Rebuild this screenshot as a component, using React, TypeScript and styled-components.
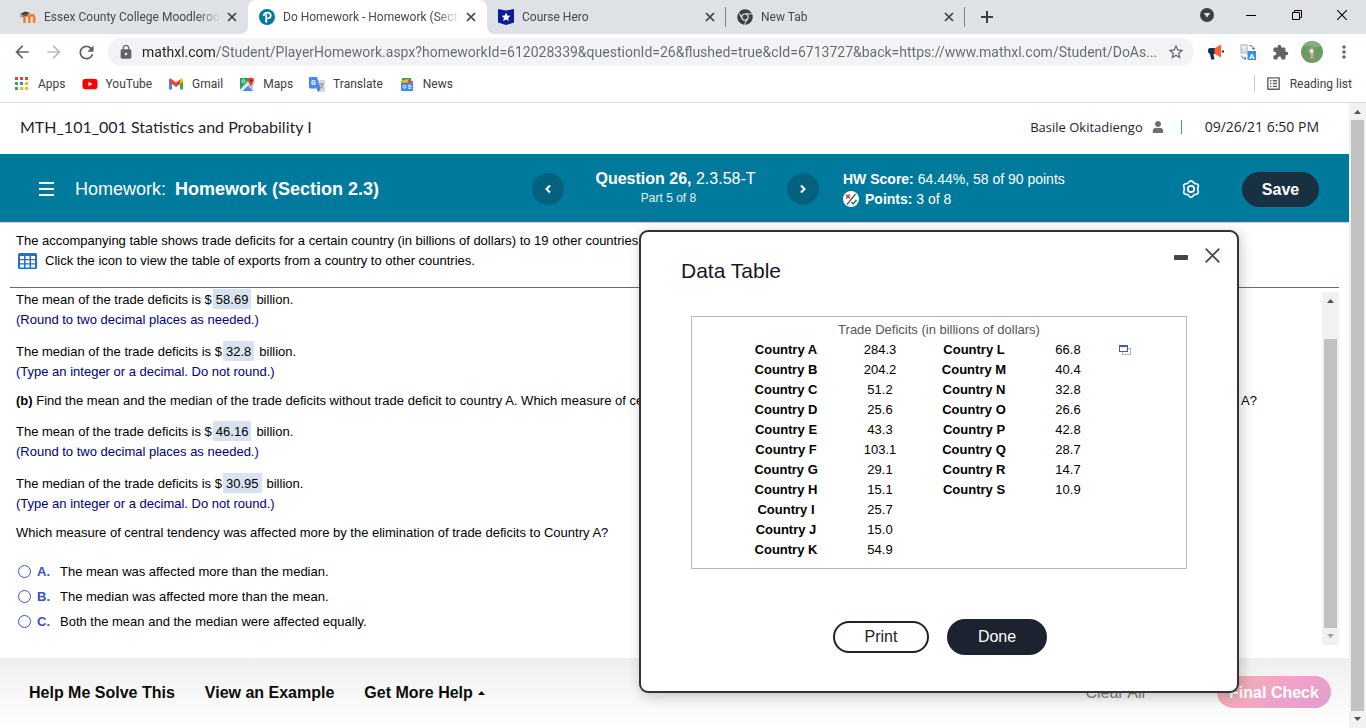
import React from "react";
import styled, { createGlobalStyle, css } from "styled-components";
import { FaChrome, FaUser, FaYoutube } from "react-icons/fa";
import { MdArrowBack, MdArrowForward, MdExtension, MdLock, MdMoreVert, MdRefresh, MdStarBorder, MdListAlt } from "react-icons/md";

const Global = createGlobalStyle`
  * { box-sizing: border-box; }
  body { margin: 0; background: #fff; color: #000; font-family: "Liberation Sans", Arial, sans-serif; }
  button { font-family: inherit; cursor: pointer; }
`;

const chromeFont = css`font-family: Roboto, "Noto Sans", sans-serif;`;

const Window = styled.div`
  min-height: 100vh;
  display: flex;
  flex-direction: column;
  overflow: hidden;
`;

/* Browser frame */
const TabStrip = styled.header`
  ${chromeFont}
  display: flex;
  align-items: center;
  height: 34px;
  padding: 0 1px 0 9px;
  background: #dee1e6;
`;
const Tab = styled.div<{ $active?: boolean; $divider?: boolean }>`
  position: relative;
  flex: 0 1 239px;
  min-width: 0;
  height: 34px;
  display: flex;
  align-items: center;
  gap: 8px;
  padding: 0 9px 0 11px;
  font-size: 12px;
  color: #45494d;
  ${(p) => p.$active && css`
    background: #fff;
    border-radius: 8px 8px 0 0;
    &::before, &::after {
      content: "";
      position: absolute;
      bottom: 0;
      width: 8px;
      height: 8px;
    }
    &::before { left: -8px; background: radial-gradient(circle at 0 0, transparent 8px, #fff 8px); }
    &::after { right: -8px; background: radial-gradient(circle at 100% 0, transparent 8px, #fff 8px); }
  `}
  ${(p) => p.$divider && css`
    &::after {
      content: "";
      position: absolute;
      right: 0;
      top: 7px;
      width: 1px;
      height: 20px;
      background: #808387;
    }
  `}
  > svg { flex: none; }
`;
const TabTitle = styled.span`
  flex: 1;
  min-width: 0;
  overflow: hidden;
  white-space: nowrap;
  mask-image: linear-gradient(90deg, #000 calc(100% - 24px), transparent);
`;
const IconButton = styled.button<{ $w?: number }>`
  flex: none;
  display: flex;
  align-items: center;
  justify-content: center;
  width: ${(p) => p.$w ?? 32}px;
  height: 28px;
  padding: 0;
  border: 0;
  background: none;
  color: #5f6368;
`;
const CloseTab = styled(IconButton)`
  width: 14px;
  margin-left: -4px;
`;
const WindowControls = styled.div`
  margin-left: auto;
  display: flex;
  height: 30px;
  align-self: flex-start;
  align-items: center;
`;
const Toolbar = styled.div`
  ${chromeFont}
  display: flex;
  align-items: center;
  height: 36px;
  padding: 0 6px;
`;
const Omnibox = styled.label`
  flex: 1;
  min-width: 0;
  display: flex;
  align-items: center;
  height: 28px;
  margin: 0 6px;
  padding: 0 9px 0 10px;
  gap: 8px;
  border-radius: 14px;
  background: #f1f3f4;
  color: #5f6368;
`;
const UrlInput = styled.input`
  ${chromeFont}
  flex: 1;
  min-width: 0;
  padding: 0;
  border: 0;
  outline: 0;
  font-size: 14px;
  text-overflow: ellipsis;
  color: transparent;
  background: linear-gradient(90deg, #202124 73px, #65696e 73px);
  background-clip: text;
`;
const Bookmarks = styled.nav`
  ${chromeFont}
  display: flex;
  align-items: center;
  gap: 16px;
  height: 33px;
  padding: 0 14px 5px;
  border-bottom: 1px solid #dcdde0;
  font-size: 12px;
`;
const Bookmark = styled.a`
  display: flex;
  align-items: center;
  gap: 8px;
  color: #3c4043;
  text-decoration: none;
  white-space: nowrap;
`;
const ReadingList = styled(Bookmark)`
  margin-left: auto;
  padding-left: 10px;
  border-left: 1px solid #c4c6c9;
`;

/* Page */
const Viewport = styled.div`
  flex: 1;
  display: flex;
  align-items: stretch;
`;
const Page = styled.main`
  position: relative;
  flex: 1;
  min-width: 0;
  display: flex;
  flex-direction: column;
`;
const CourseBar = styled.div`
  display: flex;
  align-items: center;
  height: 51px;
  padding: 0 30px 4px 20px;
  color: #1f2430;
`;
const CourseName = styled.h1`
  margin: 0;
  font: 400 16px Lato, sans-serif;
`;
const UserInfo = styled.div`
  margin-left: auto;
  display: flex;
  align-items: center;
  font: 400 13px "Open Sans", "Noto Sans", sans-serif;
  svg { margin-left: 9px; color: #6a7070; }
`;
const Divider = styled.span`
  width: 1px;
  height: 14px;
  margin: 0 23px 0 17px;
  background: #3c93b8;
`;
const DateText = styled.time`
  font-size: 14px;
`;
const AssignmentBar = styled.div`
  display: flex;
  align-items: center;
  height: 69px;
  padding: 2px 30px 0 39px;
  background: #007a9c;
  border-bottom: 1px solid #c7d3e0;
  color: #fff;
`;
const AssignmentTitle = styled.h2`
  flex: 0 1 493px;
  display: flex;
  align-items: center;
  gap: 9px;
  margin: 0;
  font-size: 18px;
  font-weight: 400;
  white-space: nowrap;
`;
const MenuButton = styled.button`
  display: flex;
  margin-right: 12px;
  padding: 0;
  border: 0;
  background: none;
  color: #fff;
`;
const RoundButton = styled.button`
  flex: none;
  display: flex;
  align-items: center;
  justify-content: center;
  width: 32px;
  height: 32px;
  padding: 0;
  border: 0;
  border-radius: 50%;
  background: #05627f;
  color: #fff;
`;
const QuestionInfo = styled.div`
  flex: 0 0 223px;
  text-align: center;
  font-size: 16px;
  line-height: 20px;
  padding-bottom: 2px;
  small { display: block; padding-right: 14px; font-size: 12px; line-height: 18px; color: #e3f1f5; }
`;
const Score = styled.div`
  margin-left: 24px;
  font-size: 14px;
  line-height: 20px;
  white-space: nowrap;
`;
const ScoreLine = styled.div`
  display: flex;
  align-items: center;
  gap: 6px;
`;
const GearButton = styled.button`
  display: flex;
  margin: 0 42px 0 auto;
  padding: 0;
  border: 0;
  background: none;
  color: #fff;
`;
const Pill = styled.button<{ $kind: "save" | "outline" | "dark" | "final" }>`
  border: 0;
  border-radius: 18px;
  font-size: 16px;
  ${(p) => p.$kind === "save" && css`width: 77px; height: 35px; padding: 2px 0 0; background: #173141; color: #fff; font-weight: 700;`}
  ${(p) => p.$kind === "outline" && css`width: 96px; height: 32px; border: 2px solid #1c2230; background: #fff; color: #1c2230;`}
  ${(p) => p.$kind === "dark" && css`width: 100px; height: 36px; background: #1c2230; color: #fff;`}
  ${(p) => p.$kind === "final" && css`width: 114px; height: 32px; padding: 2px 0 0; background: linear-gradient(135deg, #f3b5b0, #f0a1ca 60%, #e29ecb); color: #fff; font-weight: 700;`}
`;
const Prompt = styled.section`
  margin: 0 10px;
  padding: 8px 6px 16px;
  border-bottom: 1px solid #626c7b;
  font-size: 13px;
  line-height: 20px;
  white-space: nowrap;
`;
const PromptLink = styled.a`
  display: flex;
  align-items: center;
  gap: 8px;
  padding-left: 2px;
  color: #000;
  text-decoration: none;
`;
const Workspace = styled.section`
  flex: 1;
  display: flex;
  padding: 4px 10px 13px 16px;
  font-size: 13px;
  line-height: 20px;
`;
const Work = styled.div`
  flex: 1;
  min-width: 0;
  margin-top: -2px;
  white-space: nowrap;
`;
const Answered = styled.div`
  margin-bottom: 12px;
`;
const Statement = styled.p`
  margin: 0;
`;
const Hint = styled.p`
  margin: 0;
  color: #00007e;
`;
const Value = styled.span`
  margin: 0 5px 0 1px;
  padding: 3px 3px 2px;
  background: #d9e2f0;
`;
const PartText = styled.p`
  margin: -3px 0 11px;
`;
const Choices = styled.fieldset`
  margin: 16px 0 0;
  padding: 0;
  border: 0;
`;
const Choice = styled.label`
  display: flex;
  align-items: center;
  height: 25px;
  b { width: 23px; margin-left: 6px; color: #3c50c8; font-weight: 700; }
`;
const Radio = styled.input`
  appearance: none;
  width: 13px;
  height: 13px;
  margin: 0 0 0 2px;
  border: 1px solid #3a54c0;
  border-radius: 50%;
  background: #fff;
  &:checked { background: #3a54c0; }
`;
const Scrollbar = styled.div`
  flex: none;
  width: 17px;
  display: flex;
  flex-direction: column;
  align-items: center;
  background: #f1f1f1;
`;
const Arrow = styled.span<{ $down?: boolean; $muted?: boolean }>`
  flex: none;
  height: 17px;
  display: flex;
  align-items: center;
  color: ${(p) => (p.$muted ? "#a3a3a3" : "#505050")};
  transform: ${(p) => (p.$down ? "rotate(180deg)" : "none")};
`;
const Track = styled.div<{ $before: number }>`
  flex: 1;
  width: 13px;
  padding-top: ${(p) => p.$before}px;
  display: flex;
  &::before { content: ""; flex: 1; background: #c1c1c1; }
`;
const HelpBar = styled.footer`
  display: flex;
  align-items: center;
  gap: 30px;
  height: 70px;
  padding: 0 18px 2px 29px;
  background: linear-gradient(#efefef, #fff);
`;
const HelpButton = styled.button<{ $quiet?: boolean }>`
  display: flex;
  align-items: center;
  gap: 5px;
  padding: 2px 0 0;
  border: 0;
  background: none;
  font-size: 16px;
  font-weight: ${(p) => (p.$quiet ? 400 : 700)};
  color: ${(p) => (p.$quiet ? "#7d8084" : "#0b0b0b")};
  margin-left: ${(p) => (p.$quiet ? "auto" : 0)};
  margin-right: ${(p) => (p.$quiet ? "42px" : 0)};
`;

/* Floating data table window */
const Dialog = styled.section`
  position: absolute;
  top: 127px;
  right: 110px;
  width: 600px;
  height: 463px;
  display: flex;
  flex-direction: column;
  border: 2px solid #333;
  border-radius: 9px;
  background: #fff;
  box-shadow: 2px 3px 14px rgba(0, 0, 0, 0.22);
`;
const DialogHead = styled.div`
  display: flex;
  align-items: flex-start;
  padding: 15px 16px 0 40px;
  height: 84px;
  h2 { margin: 12px auto 0 0; font-size: 21px; line-height: 24px; font-weight: 400; color: #14181f; }
`;
const DialogIcon = styled.button`
  display: flex;
  padding: 0;
  margin-left: 16px;
  border: 0;
  background: none;
  color: #40505f;
`;
const TableFrame = styled.div`
  margin: 0 50px;
  height: 253px;
  padding-top: 3px;
  border: 1px solid #b5b7b9;
`;
const DataTable = styled.table`
  table-layout: fixed;
  width: 400px;
  margin: 0 auto;
  border-collapse: collapse;
  font-size: 13px;
  line-height: 20px;
  text-align: center;
  caption { color: #555; line-height: 20px; }
  th, td { padding: 0; width: 94px; height: 20px; }
  th:last-child, td:last-child { width: 24px; }
`;
const CopyButton = styled.button`
  display: block;
  margin: 0 0 0 4px;
  padding: 0;
  border: 0;
  background: none;
  line-height: 0;
`;
const DialogActions = styled.div`
  flex: 1;
  display: flex;
  align-items: center;
  justify-content: center;
  gap: 18px;
  padding: 14px 0 0 2px;
`;

const left = [
  ["A", "284.3"], ["B", "204.2"], ["C", "51.2"], ["D", "25.6"], ["E", "43.3"], ["F", "103.1"],
  ["G", "29.1"], ["H", "15.1"], ["I", "25.7"], ["J", "15.0"], ["K", "54.9"],
];
const right = [
  ["L", "66.8"], ["M", "40.4"], ["N", "32.8"], ["O", "26.6"], ["P", "42.8"], ["Q", "28.7"], ["R", "14.7"], ["S", "10.9"],
];
const choices = [
  ["A.", "The mean was affected more than the median."],
  ["B.", "The median was affected more than the mean."],
  ["C.", "Both the mean and the median were affected equally."],
];

const Cross = ({ size, width, color }: { size: number; width: number; color: string }) => (
  <svg width={size} height={size} viewBox="0 0 10 10" stroke={color} strokeWidth={width} fill="none">
    <path d="M1 1l8 8M9 1l-8 8" />
  </svg>
);
const MoodleIcon = () => (
  <svg width="16" height="16" viewBox="0 0 16 16">
    <path d="M4.500 14V8.500a2.400 2.400 0 0 1 4.800 0V14M9.300 8.500a2.400 2.400 0 0 1 4.800 0V14" fill="none" stroke="#f2822a" strokeWidth="2.600" />
    <path d="M0 5l5-2.500 5 1.200-4.500 3z" fill="#45423f" />
    <path d="M2.500 5.500v3l2-1.500 3-.5V5z" fill="#5d5a57" />
    <path d="M.8 5v4" stroke="#6b6865" strokeWidth=".7" />
  </svg>
);
const PearsonIcon = () => (
  <svg width="16" height="16" viewBox="0 0 16 16">
    <circle cx="8" cy="8" r="8" fill="#047a9c" />
    <path d="M7.200 13V5.200M4.500 6.800C5 4.500 6.500 3.600 8.300 3.600c2 0 3.400 1.100 3.400 2.800 0 1.900-1.500 3-3.700 3" fill="none" stroke="#fff" strokeWidth="1.700" />
    <circle cx="7.300" cy="12.600" r="1.100" fill="#fff" />
  </svg>
);
const HeroIcon = () => (
  <svg width="16" height="16" viewBox="0 0 16 16">
    <path d="M0 0l8 1.500L16 0v13.500L8 16l-8-2.500z" fill="#0c1b9a" />
    <path d="M8 3.600l1.300 2.900 3.100.3-2.300 2.100.7 3.100L8 10.400 5.200 12l.7-3.100-2.300-2.100 3.100-.3z" fill="#fff" />
  </svg>
);
const AppsIcon = () => (
  <svg width="16" height="16" viewBox="0 0 16 16">
    {["#ea4335", "#ea4335", "#ea4335", "#34a853", "#1a86f5", "#fbbc05", "#34a853", "#fbbc05", "#fbbc05"].map((c, i) => (
      <rect key={i} x={1 + (i % 3) * 5} y={1 + Math.floor(i / 3) * 5} width="3" height="3" fill={c} />
    ))}
  </svg>
);
const GmailIcon = () => (
  <svg width="16" height="16" viewBox="0 0 16 16">
    <path d="M1 4v9.500h3V7z" fill="#4285f4" />
    <path d="M15 4v9.500h-3V7z" fill="#34a853" />
    <path d="M12 3.500V8l3-2.300V4c0-1.600-1.700-2.200-3-.5z" fill="#fbbc04" />
    <path d="M1 4c0-1.600 1.700-2.200 3-.5l4 3 4-3V8l-4 3-4-3-3-2.300z" fill="#ea4335" />
  </svg>
);
const MapsIcon = () => (
  <svg width="16" height="16" viewBox="0 0 16 16">
    <rect x="1" y="2" width="13" height="13" rx="1" fill="#1fa463" />
    <path d="M2 15l6-6 6 6z" fill="#4a89f3" />
    <path d="M1 13.500L12 2h2v3L3.500 15H1z" fill="#e8e8e8" />
    <path d="M9 10l5 5V6z" fill="#c9cdd2" />
    <path d="M12 11c0-2.500-3-4-3-6.500a3 3 0 0 1 6 0C15 7 12 8.500 12 11z" fill="#ea4335" />
    <circle cx="12" cy="4.500" r="1.100" fill="#7d1f17" />
    <circle cx="4.500" cy="5.200" r="1.500" fill="none" stroke="#fff" strokeWidth=".8" />
  </svg>
);
const TranslateIcon = () => (
  <svg width="16" height="16" viewBox="0 0 16 16">
    <path d="M6 4h10v12H9z" fill="#d5d8dc" />
    <path d="M0 1h8l3.500 11.500H1.200A1.200 1.200 0 0 1 0 11.300z" fill="#4687f0" />
    <path d="M8 12.500h3.500L9 16z" fill="#2c5fc0" />
    <text x="2" y="9" fontSize="7" fontWeight="700" fill="#fff">G</text>
    <path d="M10.500 8h4M12.500 7v1M14 8c-.5 2-1.500 3-2.500 4M11.200 9.500l2.800 3" stroke="#7a8085" strokeWidth=".8" fill="none" />
  </svg>
);
const NewsIcon = () => (
  <svg width="16" height="16" viewBox="0 0 16 16">
    <path d="M3 2h9v6H3z" fill="#34a853" />
    <path d="M1.500 5l8-2 1 5-8 1z" fill="#fbbc04" />
    <path d="M9 4l5 1-1 4H9z" fill="#ea4335" />
    <rect x="2" y="6.500" width="12" height="8.500" rx="1" fill="#4285f4" />
    <circle cx="5.500" cy="10.700" r="1.500" fill="none" stroke="#fff" />
    <path d="M9 9.300h3.500M9 10.800h3.500M9 12.300h3.500" stroke="#fff" strokeWidth=".8" />
  </svg>
);
const Megaphone = () => (
  <svg width="16" height="16" viewBox="0 0 16 16">
    <path d="M0 6.500C0 4.500 1 4 3 4h4v6H5.500l1 5.500H3.200L2 10C.5 9.500 0 8.500 0 6.500z" fill="#17324d" />
    <path d="M6.500 4.200L13 .5v13l-6.500-3.700z" fill="#ff5c35" />
    <path d="M14 6.500h2v2h-2z" fill="#17324d" />
  </svg>
);
const PageTranslate = () => (
  <svg width="16" height="16" viewBox="0 0 16 16">
    <rect width="8" height="10" fill="#cfd3d6" />
    <path d="M2 3h4M4 2v1M5.500 3C5 5 4 6 2.500 7M3 4.500l2.800 2.500" stroke="#fff" strokeWidth=".9" fill="none" />
    <path d="M9.500 1.500c2.500 0 4 1.500 4.200 4M12.200 4.200l1.500 1.500 1.500-1.500M1.500 11.500c.3 2 1.500 3 4 3M4.500 13l1.700 1.500L4.500 16" stroke="#5f6368" fill="none" />
    <rect x="7.500" y="7" width="8.500" height="9" fill="#2196f3" />
    <text x="9" y="14.500" fontSize="8" fontWeight="700" fill="#fff">A</text>
  </svg>
);
const Avatar = () => (
  <svg width="22" height="22" viewBox="0 0 22 22">
    <circle cx="11" cy="11" r="11" fill="#6d9b62" />
    <path d="M2 5.500a11 11 0 0 1 18 0C14 8 8 3 2 5.500z" fill="#87ae7c" />
    <circle cx="10.500" cy="6.500" r="1.500" fill="#b98e78" />
    <path d="M9 8h3.500v4.500H9z" fill="#e6e4ea" />
    <path d="M9.500 12.500h3l.5 5h-1.300l-.7-3.500-.4 3.500H9z" fill="#d9a58d" />
    <path d="M7.500 8.500l1.500 3M10 17.500h1.500" stroke="#8fb9d8" />
  </svg>
);
const GridIcon = () => (
  <svg width="19" height="16" viewBox="0 0 19 16">
    <rect width="19" height="16" rx="1.500" fill="#1e71d2" />
    <path d="M2 3h4v3H2zM7.500 3h4v3h-4zM13 3h4v3h-4zM2 7.200h4v3H2zM7.500 7.200h4v3h-4zM13 7.200h4v3h-4zM2 11.400h4v3H2zM7.500 11.400h4v3h-4zM13 11.400h4v3h-4z" fill="#fff" />
  </svg>
);
const PartialIcon = () => (
  <svg width="16" height="16" viewBox="0 0 16 16">
    <circle cx="8" cy="8" r="8" fill="#fff" />
    <path d="M4 13.500L12.500 3" stroke="#4c5660" strokeWidth="1.200" />
    <path d="M3 3.500l4 4M7 3.500l-4 4" stroke="#d0302f" strokeWidth="1.200" />
    <path d="M8.500 11l1.700 2 3.300-4" stroke="#12833b" strokeWidth="1.400" fill="none" />
  </svg>
);
const gearOutline = Array.from({ length: 72 }, (_, i) => {
  const a = (i / 72) * Math.PI * 2;
  const r = 7.4 + 0.8 * Math.cos(6 * (a + Math.PI / 2));
  return `${(9 + r * Math.cos(a)).toFixed(2)},${(9 + r * Math.sin(a)).toFixed(2)}`;
}).join(" ");
const GearIcon = () => (
  <svg width="18" height="18" viewBox="0 0 18 18" fill="none" stroke="currentColor" strokeWidth="1.600">
    <polygon points={gearOutline} strokeLinejoin="round" />
    <circle cx="9" cy="9" r="3.200" strokeWidth="1.800" />
  </svg>
);
const Chevron = ({ flip }: { flip?: boolean }) => (
  <svg width="8" height="10" viewBox="0 0 8 10" fill="none" stroke="currentColor" strokeWidth="2">
    <path d={flip ? "M2 1.500L5.500 5 2 8.500" : "M6 1.500L2.500 5 6 8.500"} />
  </svg>
);
const Triangle = () => (
  <svg width="7" height="4" viewBox="0 0 7 4"><path d="M3.500 0L7 4H0z" fill="currentColor" /></svg>
);
const CopyIcon = () => (
  <svg width="12" height="10" viewBox="0 0 12 10" fill="#fff">
    <rect x="3.500" y="3.500" width="8" height="6" stroke="#a9b1dc" />
    <rect x=".5" y=".5" width="8" height="6" stroke="#4a5aa8" />
    <path d="M0 1h9" stroke="#4a5aa8" strokeWidth="2" />
  </svg>
);

const tabs = [
  { title: "Essex County College Moodleroom", icon: <MoodleIcon /> },
  { title: "Do Homework - Homework (Section 2.3)", icon: <PearsonIcon />, active: true },
  { title: "Course Hero", icon: <HeroIcon />, divider: true },
  { title: "New Tab", icon: <FaChrome size={16} color="#3c4043" />, divider: true },
];
const bookmarks = [
  { name: "Apps", icon: <AppsIcon /> },
  { name: "YouTube", icon: <FaYoutube size={16} color="#f00" /> },
  { name: "Gmail", icon: <GmailIcon /> },
  { name: "Maps", icon: <MapsIcon /> },
  { name: "Translate", icon: <TranslateIcon /> },
  { name: "News", icon: <NewsIcon /> },
];

const Result = ({ measure, value, hint }: { measure: string; value: string; hint: string }) => (
  <Answered>
    <Statement>The {measure} of the trade deficits is $<Value>{value}</Value>billion.</Statement>
    <Hint>{hint}</Hint>
  </Answered>
);
const ROUND = "(Round to two decimal places as needed.)";
const EXACT = "(Type an integer or a decimal. Do not round.)";

export default function App() {
  return (
    <Window>
      <Global />
      <TabStrip>
        {tabs.map((t) => (
          <Tab key={t.title} $active={t.active} $divider={t.divider}>
            {t.icon}
            <TabTitle>{t.title}</TabTitle>
            <CloseTab aria-label="Close tab"><Cross size={10} width={1.7} color="#3c4043" /></CloseTab>
          </Tab>
        ))}
        <IconButton $w={44} aria-label="New tab">
          <svg width="12" height="12" viewBox="0 0 12 12"><path d="M6 0v12M0 6h12" stroke="#3c4043" strokeWidth="2" /></svg>
        </IconButton>
        <WindowControls>
          <IconButton $w={40} aria-label="Search tabs">
            <svg width="14" height="14" viewBox="0 0 14 14"><circle cx="7" cy="7" r="7" fill="#3c4043" /><path d="M3.800 5h6.400L7 9.500z" fill="#dee1e6" /></svg>
          </IconButton>
          <IconButton $w={48} aria-label="Minimize">
            <svg width="10" height="10" viewBox="0 0 10 10"><path d="M0 5.500h10" stroke="#000" /></svg>
          </IconButton>
          <IconButton $w={44} aria-label="Restore">
            <svg width="10" height="10" viewBox="0 0 10 10" fill="none" stroke="#000"><path d="M.5 2.500h7v7h-7zM2.500 2.500v-2h7v7h-2" /></svg>
          </IconButton>
          <IconButton $w={46} aria-label="Close window"><Cross size={12} width={0.9} color="#000" /></IconButton>
        </WindowControls>
      </TabStrip>
      <Toolbar>
        <IconButton aria-label="Back"><MdArrowBack size={20} /></IconButton>
        <IconButton aria-label="Forward"><MdArrowForward size={20} color="#b9bbbe" /></IconButton>
        <IconButton aria-label="Reload"><MdRefresh size={21} /></IconButton>
        <Omnibox>
          <MdLock size={16} />
          <UrlInput
            aria-label="Address"
            readOnly
            value="mathxl.com/Student/PlayerHomework.aspx?homeworkId=612028339&questionId=26&flushed=true&cId=6713727&back=https://www.mathxl.com/Student/DoAs..."
          />
          <IconButton $w={18} aria-label="Bookmark this tab"><MdStarBorder size={18} /></IconButton>
        </Omnibox>
        <IconButton aria-label="Announcements"><Megaphone /></IconButton>
        <IconButton aria-label="Page translator"><PageTranslate /></IconButton>
        <IconButton aria-label="Extensions"><MdExtension size={17} /></IconButton>
        <IconButton aria-label="Profile"><Avatar /></IconButton>
        <IconButton aria-label="Menu"><MdMoreVert size={20} /></IconButton>
      </Toolbar>
      <Bookmarks>
        {bookmarks.map((b) => (
          <Bookmark key={b.name} href="#">{b.icon}{b.name}</Bookmark>
        ))}
        <ReadingList href="#"><MdListAlt size={17} color="#5f6368" />Reading list</ReadingList>
      </Bookmarks>

      <Viewport>
        <Page>
          <CourseBar>
            <CourseName>MTH_101_001 Statistics and Probability I</CourseName>
            <UserInfo>
              Basile Okitadiengo
              <FaUser size={12} />
              <Divider />
              <DateText>09/26/21 6:50 PM</DateText>
            </UserInfo>
          </CourseBar>
          <AssignmentBar>
            <AssignmentTitle>
              <MenuButton aria-label="Menu">
                <svg width="15" height="14" viewBox="0 0 15 14"><path d="M0 1h15M0 7h15M0 13h15" stroke="currentColor" strokeWidth="2" /></svg>
              </MenuButton>
              Homework: <b>Homework (Section 2.3)</b>
            </AssignmentTitle>
            <RoundButton aria-label="Previous question"><Chevron /></RoundButton>
            <QuestionInfo><b>Question 26,</b> 2.3.58-T<small>Part 5 of 8</small></QuestionInfo>
            <RoundButton aria-label="Next question"><Chevron flip /></RoundButton>
            <Score>
              <div><b>HW Score:</b> 64.44%, 58 of 90 points</div>
              <ScoreLine><PartialIcon /><span><b>Points:</b> 3 of 8</span></ScoreLine>
            </Score>
            <GearButton aria-label="Settings"><GearIcon /></GearButton>
            <Pill $kind="save">Save</Pill>
          </AssignmentBar>

          <Prompt>
            The accompanying table shows trade deficits for a certain country (in billions of dollars) to 19 other countries.
            <PromptLink href="#"><GridIcon />Click the icon to view the table of exports from a country to other countries.</PromptLink>
          </Prompt>
          <Workspace>
            <Work>
              <Result measure="mean" value="58.69" hint={ROUND} />
              <Result measure="median" value="32.8" hint={EXACT} />
              <PartText><b>(b)</b> Find the mean and the median of the trade deficits without trade deficit to country A. Which measure of central tendency, the mean or the median was affected more by the elimination of trade deficits to Country A?</PartText>
              <Result measure="mean" value="46.16" hint={ROUND} />
              <Result measure="median" value="30.95" hint={EXACT} />
              <PartText>Which measure of central tendency was affected more by the elimination of trade deficits to Country A?</PartText>
              <Choices>
                {choices.map(([letter, text]) => (
                  <Choice key={letter}><Radio type="radio" name="measure" /><b>{letter}</b>{text}</Choice>
                ))}
              </Choices>
            </Work>
            <Scrollbar>
              <Arrow><Triangle /></Arrow>
              <Track $before={30} />
              <Arrow $down $muted><Triangle /></Arrow>
            </Scrollbar>
          </Workspace>

          <HelpBar>
            <HelpButton>Help Me Solve This</HelpButton>
            <HelpButton>View an Example</HelpButton>
            <HelpButton>Get More Help <Triangle /></HelpButton>
            <HelpButton $quiet>Clear All</HelpButton>
            <Pill $kind="final">Final Check</Pill>
          </HelpBar>

          <Dialog role="dialog" aria-label="Data Table">
            <DialogHead>
              <h2>Data Table</h2>
              <DialogIcon aria-label="Minimize">
                <svg width="14" height="20" viewBox="0 0 14 20"><rect y="8" width="14" height="5" rx="1" fill="#444" /></svg>
              </DialogIcon>
              <DialogIcon aria-label="Close"><Cross size={17} width={1.1} color="#40505f" /></DialogIcon>
            </DialogHead>
            <TableFrame>
              <DataTable>
                <caption>Trade Deficits (in billions of dollars)</caption>
                <tbody>
                  {left.map(([name, value], i) => (
                    <tr key={name}>
                      <th scope="row">Country {name}</th>
                      <td>{value}</td>
                      {right[i] ? <th scope="row">Country {right[i][0]}</th> : <td />}
                      <td>{right[i]?.[1]}</td>
                      <td>{i === 0 && <CopyButton aria-label="Copy table"><CopyIcon /></CopyButton>}</td>
                    </tr>
                  ))}
                </tbody>
              </DataTable>
            </TableFrame>
            <DialogActions>
              <Pill $kind="outline">Print</Pill>
              <Pill $kind="dark">Done</Pill>
            </DialogActions>
          </Dialog>
        </Page>
        <Scrollbar>
          <Arrow><Triangle /></Arrow>
          <Track $before={0} />
          <Arrow $down><Triangle /></Arrow>
        </Scrollbar>
      </Viewport>
    </Window>
  );
}
